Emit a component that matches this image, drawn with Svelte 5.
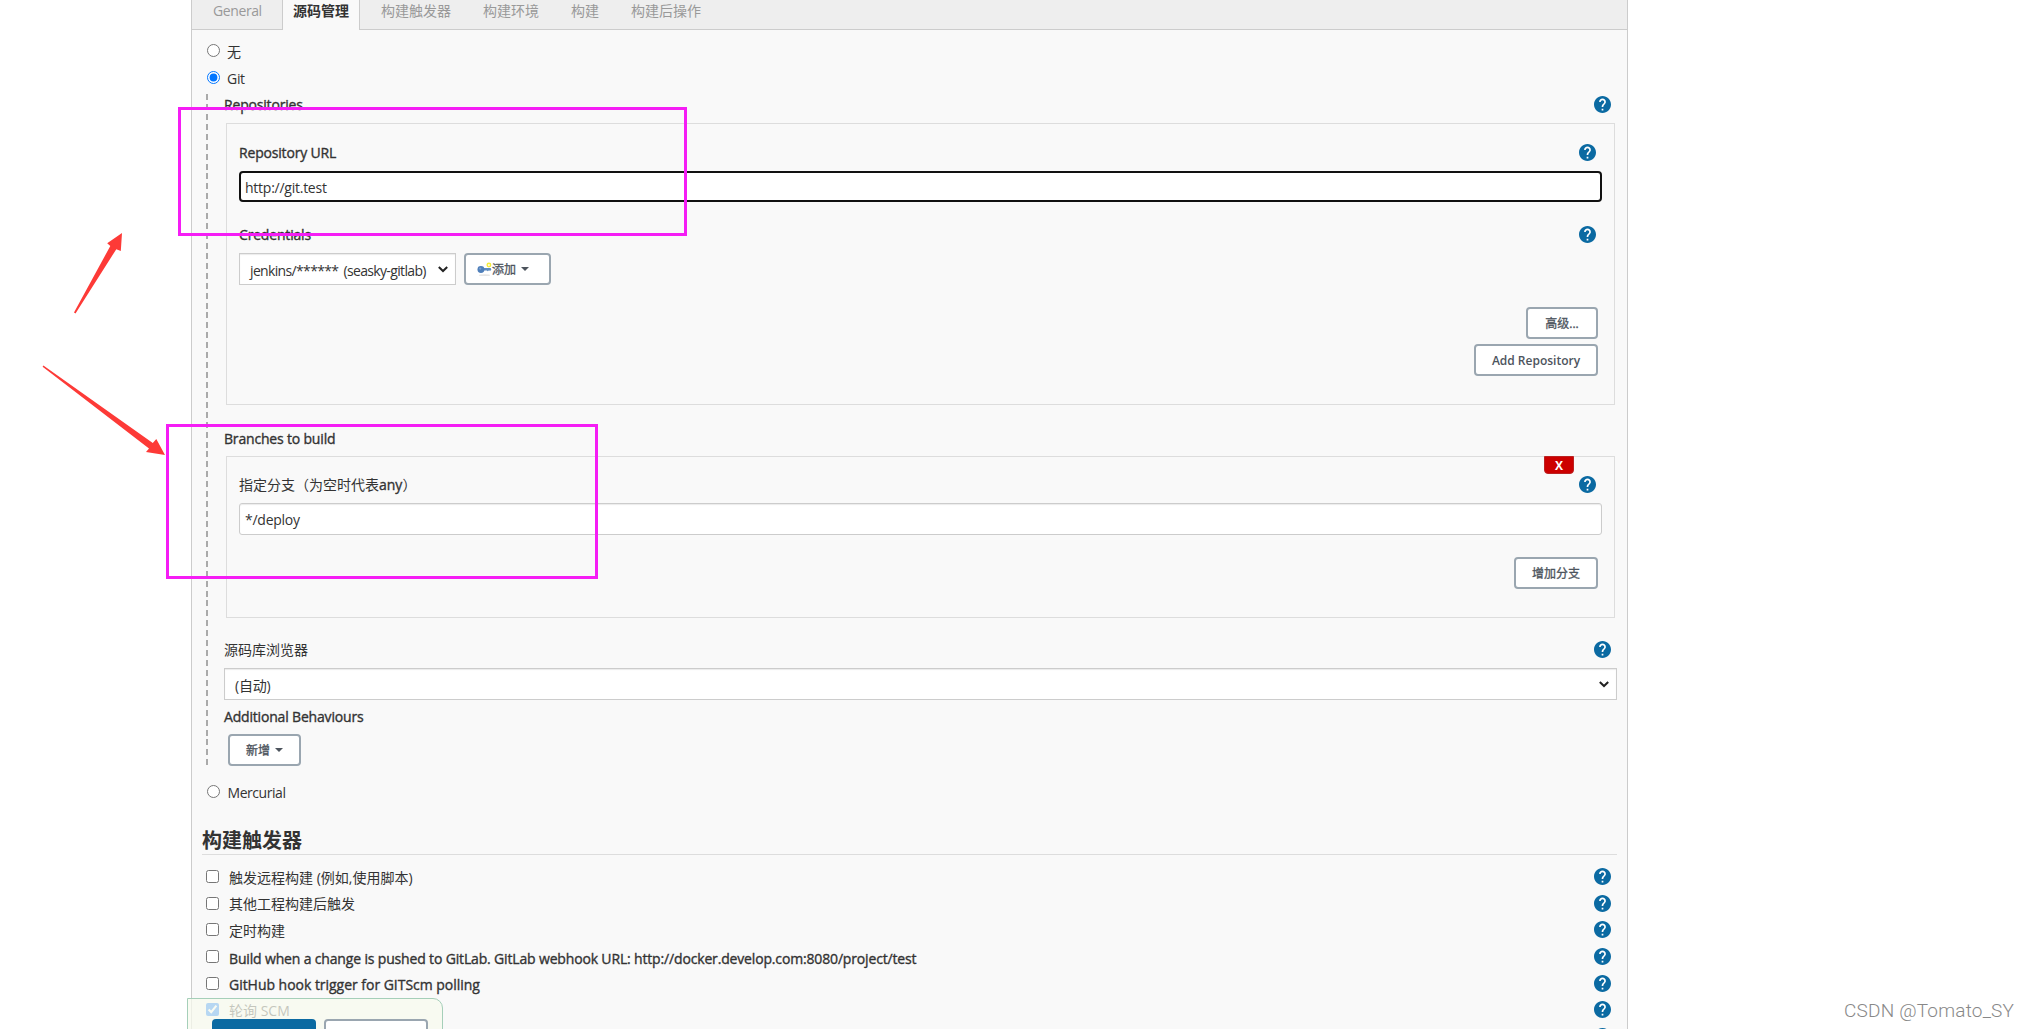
<script>
  const tabs = ['General', '源码管理', '构建触发器', '构建环境', '构建', '构建后操作'];
  const activeTab = '源码管理';
  const triggers = [
    { text: '触发远程构建 (例如,使用脚本)', cjk: true },
    { text: '其他工程构建后触发', cjk: true },
    { text: '定时构建', cjk: true },
    { text: 'Build when a change is pushed to GitLab. GitLab webhook URL: http://docker.develop.com:8080/project/test' },
    { text: 'GitHub hook trigger for GITScm polling', loose: true },
    { text: '轮询 SCM', cjk: true, checked: true },
    { text: '' }
  ];
</script>

{#snippet help()}
  <svg class="help" viewBox="2 2 20 20" aria-label="Help">
    <circle cx="12" cy="12" r="9" fill="#fff" />
    <path fill="#0b6aa2" d="M12 2C6.48 2 2 6.48 2 12s4.48 10 10 10 10-4.48 10-10S17.52 2 12 2zm1 17h-2v-2h2v2zm2.07-7.75l-.9.92C13.45 12.9 13 13.5 13 15h-2v-.5c0-1.1.45-2.1 1.17-2.83l1.24-1.26c.37-.36.59-.86.59-1.41 0-1.1-.9-2-2-2s-2 .9-2 2H8c0-2.21 1.79-4 4-4s4 1.79 4 4c0 .88-.36 1.68-.93 2.25z" />
  </svg>
{/snippet}

{#snippet chevron()}
  <svg class="chevron" viewBox="0 0 10 7"><path d="M.8 1 5 5 9.2 1" fill="none" stroke="#222" stroke-width="2" /></svg>
{/snippet}

<div class="page">
  <main class="panel">
    <nav class="tabs">
      {#each tabs as tab}
        <div class="tab" class:active={tab === activeTab} class:first={tab === 'General'}><span>{tab}</span></div>
      {/each}
    </nav>

    <div class="scm">
      <label class="radio"><input type="radio" name="scm" /><span>无</span></label>
      <label class="radio"><input type="radio" name="scm" checked /><span>Git</span></label>

      <section class="git">
        <div class="row"><span class="label">Repositories</span>{@render help()}</div>
        <div class="box repo">
          <div class="row"><span class="label">Repository URL</span>{@render help()}</div>
          <input class="text focused" type="text" value="http://git.test" />
          <div class="row cred"><span class="label">Credentials</span>{@render help()}</div>
          <div class="pick">
            <div class="select cred-select"><span>jenkins/****** (seasky-gitlab)</span>{@render chevron()}</div>
            <button class="btn add">
              <svg class="key" viewBox="0 0 16 16">
                <ellipse cx="8" cy="14" rx="6" ry="1" fill="#e6e6e6" />
                <path d="M5 6.5h9.5l.8 1.5-1.3 1.6-1.2-.8-1.2 1-1.2-.8H5z" fill="#5f8cc0" />
                <circle cx="4.2" cy="8" r="3.7" fill="#4f7fba" />
                <circle cx="3.4" cy="7" r="1.2" fill="#7ba0d0" />
                <circle cx="12.7" cy="3.3" r="1.9" fill="#fffde0" stroke="#f4ec3c" stroke-width="1.5" />
              </svg>
              <span>添加</span><i class="caret"></i>
            </button>
          </div>
          <div class="actions">
            <button class="btn advanced"><span>高级...</span></button>
            <button class="btn add-repo"><span>Add Repository</span></button>
          </div>
        </div>

        <div class="row branches"><span class="label">Branches to build</span></div>
        <div class="box branch">
          <button class="remove">X</button>
          <div class="row"><span class="label cn">指定分支（为空时代表<b>any</b>）</span>{@render help()}</div>
          <input class="text plain" type="text" value="*/deploy" />
          <div class="actions">
            <button class="btn add-branch"><span>增加分支</span></button>
          </div>
        </div>

        <div class="row browser"><span class="label cn">源码库浏览器</span>{@render help()}</div>
        <div class="select full"><span>(自动)</span>{@render chevron()}</div>
        <div class="row behaviours"><span class="label">Additional Behaviours</span></div>
        <button class="btn new"><span>新增</span><i class="caret"></i></button>
      </section>

      <label class="radio mercurial"><input type="radio" name="scm" /><span>Mercurial</span></label>
    </div>

    <h2>构建触发器</h2>
    <div class="triggers">
      {#each triggers as t}
        <div class="trigger">
          <input type="checkbox" checked={t.checked} />
          <span class:cn={t.cjk} class:loose={t.loose}>{t.text}</span>
          {@render help()}
        </div>
      {/each}
    </div>
  </main>

  <div class="savebar">
    <div class="save"></div>
    <div class="apply"></div>
  </div>

  <div class="mark mark-repo"></div>
  <div class="mark mark-branch"></div>
  <svg class="arrows" viewBox="0 0 180 470">
    <path fill="#fd3a37" d="M74 312.5 110.3 246 107.2 243.2 122 233 120.8 251 116.3 249.2 75.5 313.5z" />
    <path fill="#fd3a37" d="M43.4 365.6 152.8 443 156.3 439 165 455 146 452 149 448.6 42.6 366.8z" />
  </svg>
  <div class="watermark">CSDN @Tomato_SY</div>
</div>

<style>
  :global(body) { margin: 0; background: #fff; overflow: hidden; }
  .page {
    position: relative;
    width: 2030px;
    height: 1029px;
    overflow: hidden;
    font: 14px/20px "Open Sans", "Noto Sans CJK SC", sans-serif;
    color: #333;
  }
  input, button { font: inherit; color: inherit; box-sizing: border-box; }
  .panel {
    box-sizing: border-box;
    width: 1437px;
    height: 1060px;
    margin-left: 191px;
    border: solid #ccc;
    border-width: 0 1px;
    background: #f9f9f9;
  }
  .tabs {
    display: flex;
    height: 29px;
    background: #eee;
    border-bottom: 1px solid #ccc;
    color: #999;
    font-size: 14px;
  }
  .tab { padding: 1px 16px 0; white-space: nowrap; }
  .tab.first { box-sizing: border-box; width: 90px; padding-left: 21px; letter-spacing: -0.4px; }
  .tab.active {
    box-sizing: border-box;
    width: 78px;
    height: 30px;
    margin-right: 5px;
    padding: 1px 10px 0;
    background: #f9f9f9;
    border: solid #ccc;
    border-width: 0 1px;
    color: #333;
    font-weight: 700;
  }
  .scm { padding-top: 7px; }
  .radio {
    display: flex;
    align-items: center;
    height: 27px;
    padding-left: 15px;
  }
  .radio input, .trigger input { width: 13px; height: 13px; margin: 0; }
  .radio span { margin-left: 7px; padding-top: 3px; letter-spacing: -0.3px; }
  .git {
    display: flex;
    flex-direction: column;
    box-sizing: border-box;
    width: 1411px;
    height: 672px;
    margin: 3px 0 0 14px;
    padding-left: 18px;
    background: repeating-linear-gradient(#aaa 0 6px, transparent 6px 9.93px) 0 0 / 2px 100% no-repeat;
  }
  .row {
    display: flex;
    align-items: center;
    justify-content: space-between;
    flex: none;
    height: 20px;
    padding-right: 6px;
    margin-bottom: 1px;
  }
  .help { flex: none; width: 17px; height: 17px; }
  .label { padding-top: 2px; letter-spacing: -0.18px; -webkit-text-stroke: 0.35px #333; }
  .label.cn { padding-top: 1px; letter-spacing: 0; -webkit-text-stroke: 0; }
  .cn b { font-weight: 400; -webkit-text-stroke: 0.35px #333; }
  .box {
    display: flex;
    flex-direction: column;
    flex: none;
    box-sizing: border-box;
    width: 1389px;
    margin-left: 2px;
    padding: 18px 16px 0 12px;
    border: 1px solid #ddd;
  }
  .box .row { padding: 0 2px 0 0; }
  .repo { height: 282px; margin-top: 8px; }
  .text {
    flex: none;
    width: 1363px;
    height: 31px;
    padding: 1px 4px 0;
    border: 2px solid #111;
    border-radius: 4px;
    background: #fff;
    outline: none;
    letter-spacing: -0.25px;
  }
  .focused { margin-top: 8px; }
  .plain {
    height: 32px;
    margin: 8px 0 0;
    padding: 1px 5px 0;
    border: 1px solid #ccc;
    border-radius: 3px;
    box-shadow: inset 0 1px 1px rgba(0, 0, 0, 0.08);
  }
  .box .row.cred { margin-top: 22px; }
  .pick { display: flex; gap: 8px; margin-top: 8px; }
  .select {
    display: flex;
    align-items: center;
    justify-content: space-between;
    flex: none;
    box-sizing: border-box;
    height: 32px;
    padding: 0 7px 0 10px;
    background: #fff;
    border: 1px solid #ccc;
    box-shadow: inset 0 1px 1px rgba(0, 0, 0, 0.08);
    white-space: nowrap;
  }
  .select span { padding-top: 4px; letter-spacing: -0.2px; }
  .cred-select { width: 217px; }
  .cred-select span { letter-spacing: -0.65px; word-spacing: 2px; }
  .full { width: 1393px; margin-top: 8px; }
  .chevron { flex: none; width: 10px; height: 7px; }
  .btn {
    display: flex;
    align-items: center;
    justify-content: center;
    flex: none;
    height: 32px;
    padding: 0;
    background: #fff;
    border: 2px solid #9aa6b0;
    border-radius: 4px;
    color: #4d545d;
    font-size: 12px;
    -webkit-text-stroke: 0.3px #4d545d;
  }
  .btn span { padding-top: 1px; }
  .caret {
    margin-left: 5px;
    border: solid transparent;
    border-width: 4px 4px 0;
    border-top-color: #4d545d;
  }
  .add { width: 87px; justify-content: flex-start; padding-left: 11px; }
  .key { width: 15px; height: 15px; }
  .actions { display: flex; flex-direction: column; align-items: flex-end; gap: 5px; margin-top: 22px; }
  .advanced { width: 72px; }
  .add-repo { width: 124px; font-weight: 600; -webkit-text-stroke: 0; }
  .add-branch { width: 84px; }
  .branches { margin-top: 23px; }
  .branch { position: relative; height: 162px; margin-top: 7px; padding-top: 17px; }
  .remove {
    position: absolute;
    top: -1px;
    right: 40px;
    width: 30px;
    height: 18px;
    padding: 0;
    border: 1px solid #b22;
    border-radius: 0 0 4px 4px;
    background: #c00;
    color: #fff;
    font-size: 12px;
    line-height: 17px;
    font-weight: 700;
  }
  .browser { margin-top: 21px; }
  .behaviours { margin-top: 6px; }
  .new { width: 73px; margin: 7px 0 0 4px; }
  .mercurial { margin-top: 12px; }
  .mercurial span { margin-left: 7.5px; letter-spacing: -0.45px; }
  h2 {
    height: 29px;
    margin: 20px 10px 0;
    border-bottom: 1px solid #ddd;
    font-size: 20px;
    line-height: 31px;
    font-weight: 700;
  }
  .triggers { padding-top: 8.5px; }
  .trigger {
    display: flex;
    align-items: center;
    height: 26.6px;
    padding: 0 16px 0 14px;
  }
  .trigger span {
    flex: 1;
    margin-left: 10px;
    padding-top: 4px;
    letter-spacing: -0.16px;
    -webkit-text-stroke: 0.35px #333;
  }
  .trigger span.loose { letter-spacing: -0.03px; }
  .trigger span.cn { padding-top: 2px; letter-spacing: 0; -webkit-text-stroke: 0; }
  .savebar {
    position: absolute;
    left: 187px;
    top: 998px;
    display: flex;
    gap: 8px;
    box-sizing: border-box;
    width: 256px;
    height: 60px;
    padding: 20px 0 0 24px;
    border: 1px solid #a5cfb9;
    border-radius: 0 10px 0 0;
    background: rgba(247, 249, 238, 0.74);
  }
  .save, .apply { box-sizing: border-box; width: 104px; height: 34px; border-radius: 4px; }
  .save { background: #0b6aa2; }
  .apply { border: 2px solid #9aa6b0; background: #fff; }
  .mark { position: absolute; box-sizing: border-box; border: 3px solid #f51df5; }
  .mark-repo { left: 178px; top: 107px; width: 509px; height: 129px; }
  .mark-branch { left: 166px; top: 424px; width: 432px; height: 155px; }
  .arrows { position: absolute; left: 0; top: 0; width: 180px; height: 470px; }
  .watermark {
    position: absolute;
    left: 1844px;
    top: 999px;
    font: 300 19px/24px Roboto, sans-serif;
    letter-spacing: 0.2px;
    color: #888;
    white-space: nowrap;
  }
</style>
